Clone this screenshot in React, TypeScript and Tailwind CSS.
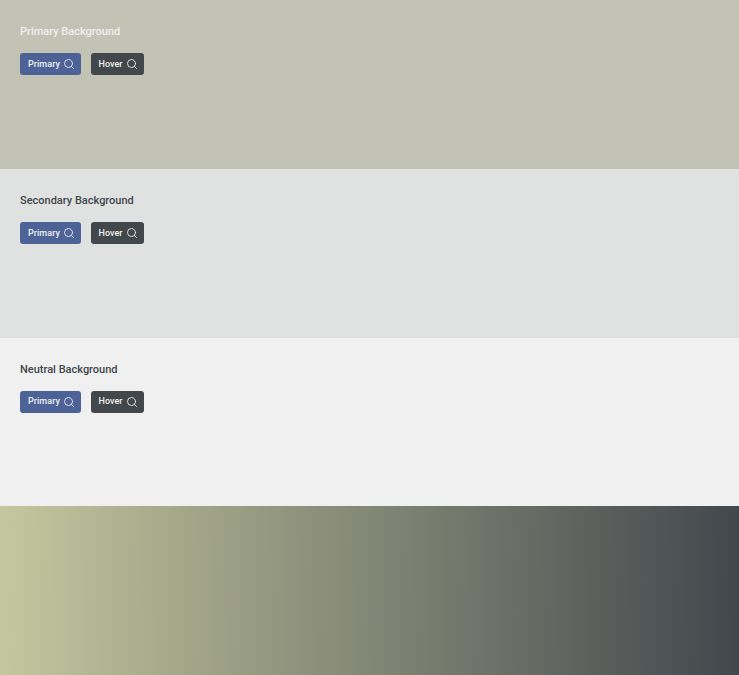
import React from "react";
import { Search } from "lucide-react";

const Buttons = () => (
  <div className="flex items-center gap-[10px]">
    <button className="flex h-[22px] w-[60.5px] items-center justify-between rounded-[3px] bg-[#4d6296] pl-[8px] pr-[6px] text-[9px] font-medium tracking-[0.05px] text-[#f0f0f0]">
      <span className="pt-px">Primary</span>
      <Search size={12} strokeWidth={1.75} />
    </button>
    <button className="flex h-[22px] w-[53px] items-center justify-between rounded-[3px] bg-[#42474b] pl-[8px] pr-[6px] text-[9px] font-medium tracking-[0.05px] text-[#f0f0f0]">
      <span className="pt-px">Hover</span>
      <Search size={12} strokeWidth={1.75} />
    </button>
  </div>
);

const Section = ({ title, className }: { title: string; className: string }) => (
  <section className={`h-[25vh] px-[20px] pt-[24px] ${className}`}>
    <h2 className="mb-[13px] h-[16px] text-[11px] leading-[16px] font-medium">{title}</h2>
    <Buttons />
  </section>
);

export default function App() {
  return (
    <main className="h-screen overflow-hidden font-['Roboto',sans-serif]">
      <Section title="Primary Background" className="bg-[#c2c2b5] text-[#f0f0f0]" />
      <Section title="Secondary Background" className="bg-[#e0e2e1] text-[#42474b]" />
      <Section title="Neutral Background" className="bg-[#f0f0f0] text-[#42474b]" />
      <div className="h-[25vh] bg-[linear-gradient(91deg,#c4c79e,#42474d)]" />
    </main>
  );
}
